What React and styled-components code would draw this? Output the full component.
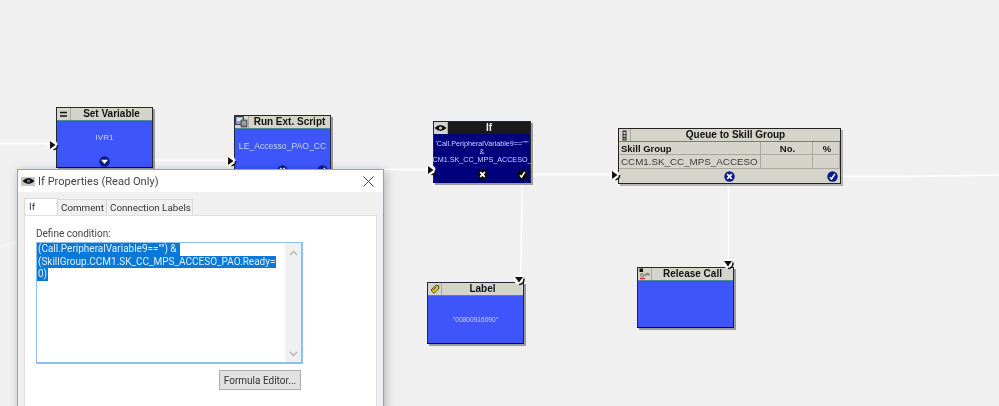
import styled, { createGlobalStyle } from 'styled-components'

//* Global
const GlobalStyle = createGlobalStyle`
  html, body {
    margin: 0;
    padding: 0;
    background: #f0f0f0;
  }
`

//* Small drawn icons
const InPort = ({ x, y }) => (
  <Port $x={x} $y={y} width='12' height='12' viewBox='0 0 12 12'>
    <circle cx='5.5' cy='6' r='5' fill='#fff' />
    <path d='M6.5 10.8 A5 5 0 0 0 10.6 6' stroke='#111' strokeWidth='1.5' fill='none' />
    <path d='M3 2 L8.5 6 L3 10 Z' fill='#111' />
  </Port>
)

const OutPort = ({ x, y }) => (
  <Port $x={x} $y={y} width='12' height='12' viewBox='0 0 12 12'>
    <circle cx='6' cy='5.5' r='5' fill='#fff' />
    <path d='M10.8 4.5 A5 5 0 0 1 6 10.6' stroke='#111' strokeWidth='1.5' fill='none' />
    <path d='M2 3 L10 3 L6 8.5 Z' fill='#111' />
  </Port>
)

const Badge = ({ kind, dark }) => (
  <svg width='11' height='11' viewBox='0 0 11 11'>
    <circle cx='5.5' cy='5.5' r='5.2' fill={dark ? '#0a0a0a' : '#0b1a8c'} />
    {kind === 'x' && (
      <path d='M3.2 3.2 L7.8 7.8 M7.8 3.2 L3.2 7.8' stroke='#fff' strokeWidth='1.8' />
    )}
    {kind === 'check' && (
      <path d='M3 6.2 L4.6 8 L7.8 2.8' stroke='#fff' strokeWidth='1.5' fill='none' />
    )}
    {kind === 'down' && <path d='M2 3.8 L9 3.8 L5.5 8 Z' fill='#fff' />}
  </svg>
)

const EyeIcon = ({ light }) => (
  <svg width='13' height='8' viewBox='0 0 13 8'>
    <path d='M0.5 4 Q6.5 -2 12.5 4 Q6.5 10 0.5 4 Z' fill='#111' />
    <circle cx='6.5' cy='4' r='1.6' fill={light ? '#ccc' : '#777'} />
  </svg>
)

const EqualsIcon = () => (
  <svg width='9' height='7' viewBox='0 0 9 7'>
    <path d='M1 1.5 H8 M1 5 H8' stroke='#111' strokeWidth='1.6' />
  </svg>
)

const ScriptIcon = () => (
  <svg width='13' height='12' viewBox='0 0 13 12'>
    <rect x='0.5' y='0.5' width='8' height='8' fill='#8aa0c8' stroke='#444' />
    <rect x='2' y='2' width='5' height='3' fill='#e8e8e8' />
    <rect x='6' y='4' width='6' height='7' fill='#777' stroke='#333' strokeWidth='0.6' />
    <path d='M7 6 H11 M7 8 H11' stroke='#ddd' strokeWidth='0.8' />
  </svg>
)

const TagIcon = () => (
  <svg width='10' height='10' viewBox='0 0 10 10'>
    <path d='M1 6 L6 1 L9 2 L8.5 5 L4 9.5 Z' fill='#d8c21a' stroke='#333' strokeWidth='0.8' />
    <path d='M3 6 L6 3' stroke='#333' strokeWidth='0.8' />
  </svg>
)

const ReleaseIcon = () => (
  <svg width='12' height='12' viewBox='0 0 12 12'>
    <rect x='0.5' y='0.5' width='3.5' height='3.5' fill='#111' />
    <path d='M5 7 Q8 3 11 6 L10 8 L8.5 7 L6.5 8 L6 9 Z' fill='#888' />
    <path d='M1 10.5 H6' stroke='#d22' strokeWidth='1.4' />
    <circle cx='3' cy='7' r='1.5' fill='none' stroke='#777' />
  </svg>
)

const QueueIcon = () => (
  <svg width='5' height='11' viewBox='0 0 5 11'>
    <rect x='0.5' y='0.5' width='4' height='10' fill='#333' />
    <rect x='1.5' y='2' width='2' height='2' fill='#ddd' />
    <rect x='1.5' y='5' width='2' height='2' fill='#bbb' />
    <rect x='1.5' y='8' width='2' height='1.5' fill='#999' />
  </svg>
)

const App = () => {
  return (
    <Page>
      <GlobalStyle />

      {/* Connections between the nodes */}
      <Wires width='999' height='406' viewBox='0 0 999 406'>
        <path d='M0 143.5 H52' />
        <path d='M153 160.5 H230' />
        <path d='M331 169.5 H430' />
        <path d='M531 174.5 H614' />
        <path d='M841 176.5 H900 L999 175' />
        <path d='M522.5 184 L520.5 276' />
        <path d='M728.5 184 V262' />
        <path d='M0 248 L17 241' strokeOpacity='0.4' />
      </Wires>

      <Node $x={56} $y={107} $w={97} $h={61}>
        <Header>
          <IconCell><EqualsIcon /></IconCell>
          <Title>Set Variable</Title>
        </Header>
        <Body>
          <BodyText $size={8}>IVR1</BodyText>
          <BadgeRow $align='center'><Badge kind='down' /></BadgeRow>
        </Body>
      </Node>
      <InPort x={47} y={139} />

      <Node $x={234} $y={115} $w={97} $h={62}>
        <Header>
          <IconCell><ScriptIcon /></IconCell>
          <Title>Run Ext. Script</Title>
        </Header>
        <Body>
          <BodyText $size={8.6}>LE_Accesso_PAO_CC</BodyText>
          <BadgeRow $align='space-between' $pad='0 2px 0 42px'>
            <Badge kind='x' />
            <Badge kind='check' />
          </BadgeRow>
        </Body>
      </Node>
      <InPort x={225} y={155} />

      <Node $x={433} $y={121} $w={98} $h={62} $dark>
        <Header $dark>
          <IconCell $dark><EyeIcon light /></IconCell>
          <Title $dark>If</Title>
        </Header>
        <Body $dark>
          <BodyText $size={7.2} $dark>
            <span>
              'Call.PeripheralVariable9==""'
              <br />
              &amp;
              <br />
              CM1.SK_CC_MPS_ACCESO_
            </span>
          </BodyText>
          <BadgeRow $align='space-between' $pad='0 2px 2px 43px'>
            <Badge kind='x' dark />
            <Badge kind='check' dark />
          </BadgeRow>
        </Body>
      </Node>
      <InPort x={425} y={164} />

      <QueueNode>
        <Header>
          <IconCell $narrow><QueueIcon /></IconCell>
          <Title>Queue to Skill Group</Title>
        </Header>
        <SkillGrid>
          <SkillHead>Skill Group</SkillHead>
          <SkillHead $center>No.</SkillHead>
          <SkillHead $center>%</SkillHead>
          <SkillCell>CCM1.SK_CC_MPS_ACCESO</SkillCell>
          <SkillCell />
          <SkillCell />
        </SkillGrid>
        <QueueFooter>
          <Badge kind='x' />
          <Badge kind='check' />
        </QueueFooter>
      </QueueNode>
      <InPort x={609} y={169} />

      <Node $x={427} $y={282} $w={97} $h={62}>
        <Header>
          <IconCell><TagIcon /></IconCell>
          <Title>Label</Title>
        </Header>
        <Body>
          <BodyText $size={6.6}>"00800916090"</BodyText>
        </Body>
      </Node>
      <OutPort x={513} y={274} />

      <Node $x={637} $y={267} $w={97} $h={61}>
        <Header>
          <IconCell><ReleaseIcon /></IconCell>
          <Title>Release Call</Title>
        </Header>
        <Body />
      </Node>
      <OutPort x={722} y={258} />

      {/* Properties dialog */}
      <Dialog>
        <TitleBar>
          <TitleIcon><EyeIcon /></TitleIcon>
          <DialogTitle>If Properties (Read Only)</DialogTitle>
          <CloseIcon width='11' height='11' viewBox='0 0 11 11'>
            <path d='M0.5 0.5 L10.5 10.5 M10.5 0.5 L0.5 10.5' />
          </CloseIcon>
        </TitleBar>
        <DialogBody>
          <Tabs>
            <Tab $active $w={34}>If</Tab>
            <Tab $w={49}>Comment</Tab>
            <Tab $w={86}>Connection Labels</Tab>
          </Tabs>
          <TabPanel>
            <FieldLabel>Define condition:</FieldLabel>
            <ConditionBox>
              <ConditionText>
                <Selected>(Call.PeripheralVariable9=="") &amp;&nbsp;</Selected>
                <br />
                <Selected>(SkillGroup.CCM1.SK_CC_MPS_ACCESO_PAO.Ready=</Selected>
                <br />
                <Selected>0)</Selected>
              </ConditionText>
              <ScrollBar>
                <svg width='9' height='6' viewBox='0 0 9 6'>
                  <path d='M1 5 L4.5 1.5 L8 5' />
                </svg>
                <svg width='9' height='6' viewBox='0 0 9 6'>
                  <path d='M1 1 L4.5 4.5 L8 1' />
                </svg>
              </ScrollBar>
            </ConditionBox>
            <ButtonRow>
              <FormulaButton>Formula Editor...</FormulaButton>
            </ButtonRow>
          </TabPanel>
        </DialogBody>
      </Dialog>
    </Page>
  )
}

const Page = styled.div`
  position: relative;
  width: 999px;
  height: 406px;
  overflow: hidden;
  background: #f0f0f0;
  font-family: 'Liberation Sans', Arial, sans-serif;
  filter: blur(0.35px);
`

const Wires = styled.svg`
  position: absolute;
  top: 0;
  left: 0;
  path {
    stroke: #fff;
    stroke-width: 1.4;
    fill: none;
  }
`

const Port = styled.svg`
  position: absolute;
  left: ${(p) => p.$x}px;
  top: ${(p) => p.$y}px;
`

const Node = styled.div`
  position: absolute;
  left: ${(p) => p.$x}px;
  top: ${(p) => p.$y}px;
  width: ${(p) => p.$w}px;
  height: ${(p) => p.$h}px;
  box-sizing: border-box;
  display: flex;
  flex-direction: column;
  background: ${(p) => (p.$dark ? '#00007e' : '#3d55fb')};
  border: 1px solid #20283c;
  border-bottom-color: #00006e;
  box-shadow: 2px 2px 0 #9c9c9c;
`

const Header = styled.div`
  display: flex;
  height: 12px;
  flex: none;
  background: ${(p) => (p.$dark ? '#1a1a1a' : '#d5d4cb')};
  border-bottom: 1px solid ${(p) => (p.$dark ? '#00007e' : '#4a8a9a')};
`

const IconCell = styled.div`
  width: ${(p) => (p.$narrow ? 11 : 13)}px;
  flex: none;
  display: flex;
  align-items: center;
  justify-content: center;
  background: ${(p) => (p.$dark ? '#d5d4cb' : 'transparent')};
  border-right: 1px solid #a9a89f;
`

const Title = styled.div`
  flex: 1;
  text-align: center;
  font-size: 10px;
  font-weight: 700;
  line-height: 12px;
  white-space: nowrap;
  color: ${(p) => (p.$dark ? '#f0f0f0' : '#111')};
`

const Body = styled.div`
  flex: 1;
  display: flex;
  flex-direction: column;
  align-items: stretch;
  justify-content: flex-end;
  position: relative;
`

const BodyText = styled.div`
  flex: 1;
  display: flex;
  align-items: center;
  justify-content: center;
  text-align: center;
  font-size: ${(p) => p.$size || 9}px;
  line-height: ${(p) => (p.$dark ? '8px' : '13px')};
  white-space: nowrap;
  color: #ccd3ff;
  padding-bottom: ${(p) => (p.$dark ? 0 : 1)}px;
`

const BadgeRow = styled.div`
  display: flex;
  flex: none;
  height: 12px;
  box-sizing: content-box;
  padding: ${(p) => p.$pad || 0};
  justify-content: ${(p) => p.$align};
  align-items: center;
`

const QueueNode = styled.div`
  position: absolute;
  left: 618px;
  top: 128px;
  width: 223px;
  height: 56px;
  box-sizing: border-box;
  display: flex;
  flex-direction: column;
  background: #d5d4cb;
  border: 1px solid #222;
  box-shadow: 2px 2px 0 #b4b4b4;
`

const SkillGrid = styled.div`
  display: grid;
  grid-template-columns: 142px 52px 1fr;
  grid-template-rows: 13px 14px;
`

const SkillHead = styled.div`
  font-size: 9.5px;
  font-weight: 700;
  line-height: 13px;
  padding-left: 2px;
  color: #111;
  text-align: ${(p) => (p.$center ? 'center' : 'left')};
  border-right: 1px solid #a9a89f;
  border-bottom: 1px solid #a9a89f;
  box-sizing: border-box;
  background: #d5d4cb;
`

const SkillCell = styled.div`
  line-height: 13px;
  padding-left: 2px;
  color: #3a3a3a;
  font-size: 9.8px;
  white-space: nowrap;
  border-right: 1px solid #a9a89f;
  border-bottom: 1px solid #a9a89f;
  box-sizing: border-box;
`

const QueueFooter = styled.div`
  flex: 1;
  display: flex;
  align-items: center;
  justify-content: space-between;
  padding: 0 2px 0 105px;
`

const Dialog = styled.div`
  position: absolute;
  left: 17px;
  top: 169px;
  width: 367px;
  height: 260px;
  box-sizing: border-box;
  display: flex;
  flex-direction: column;
  background: #f0f0f0;
  border: 1px solid #6aaee6;
  box-shadow: 2px 2px 9px rgba(0, 0, 0, 0.25);
  font-family: Roboto, 'Open Sans', sans-serif;
  color: #333;
`

const TitleBar = styled.div`
  display: flex;
  align-items: center;
  height: 22px;
  flex: none;
  background: #fff;
  padding: 0 9px 0 3px;
`

const TitleIcon = styled.div`
  width: 14px;
  height: 9px;
  display: flex;
  align-items: center;
  justify-content: center;
  background: #c8c8c8;
  margin-right: 3px;
`

const DialogTitle = styled.div`
  flex: 1;
  font-size: 11.1px;
  color: #444;
`

const CloseIcon = styled.svg`
  path {
    stroke: #444;
    stroke-width: 1;
    fill: none;
  }
`

const DialogBody = styled.div`
  flex: 1;
  display: flex;
  flex-direction: column;
  padding: 6px 6px 0;
`

const Tabs = styled.div`
  display: flex;
  height: 17px;
  flex: none;
  align-items: flex-end;
`

const Tab = styled.div`
  height: ${(p) => (p.$active ? 17 : 16)}px;
  line-height: ${(p) => (p.$active ? 15 : 16)}px;
  box-sizing: border-box;
  padding-left: ${(p) => (p.$active ? 4 : 3)}px;
  width: ${(p) => p.$w}px;
  font-size: 9.8px;
  white-space: nowrap;
  color: #333;
  background: ${(p) => (p.$active ? '#fff' : '#f0f0f0')};
  border: 1px solid #d9d9d9;
  border-bottom: none;
  border-left: ${(p) => (p.$active ? '1px solid #d9d9d9' : 'none')};
`

const TabPanel = styled.div`
  flex: 1;
  background: #fff;
  border: 1px solid #e0e0e0;
  padding: 11px 11px 0;
`

const FieldLabel = styled.div`
  font-size: 10px;
  line-height: 13px;
  height: 15px;
  color: #444;
`

const ConditionBox = styled.div`
  width: 267px;
  height: 122px;
  box-sizing: border-box;
  display: flex;
  border: 1px solid #8cc0ee;
  border-bottom-width: 2px;
  border-right-width: 2px;
  background: #fff;
`

const ConditionText = styled.div`
  flex: 1;
  padding: 0;
  font-size: 10px;
  line-height: 12.5px;
  white-space: nowrap;
  overflow: hidden;
`

const Selected = styled.span`
  display: inline-block;
  padding: 0 1px;
  background: #0a78d7;
  color: #dceeff;
`

const ScrollBar = styled.div`
  width: 16px;
  flex: none;
  background: #f0f0f0;
  display: flex;
  flex-direction: column;
  justify-content: space-between;
  align-items: center;
  padding: 7px 0 5px;
  svg path {
    stroke: #b5b5b5;
    stroke-width: 1.4;
    fill: none;
  }
`

const ButtonRow = styled.div`
  display: flex;
  justify-content: flex-end;
  width: 265px;
  margin-top: 6px;
`

const FormulaButton = styled.button`
  width: 82px;
  height: 20px;
  padding: 0;
  white-space: nowrap;
  background: #e1e1e1;
  border: 1px solid #adadad;
  font-family: Roboto, 'Open Sans', sans-serif;
  font-size: 10px;
  color: #333;
`

export default App
